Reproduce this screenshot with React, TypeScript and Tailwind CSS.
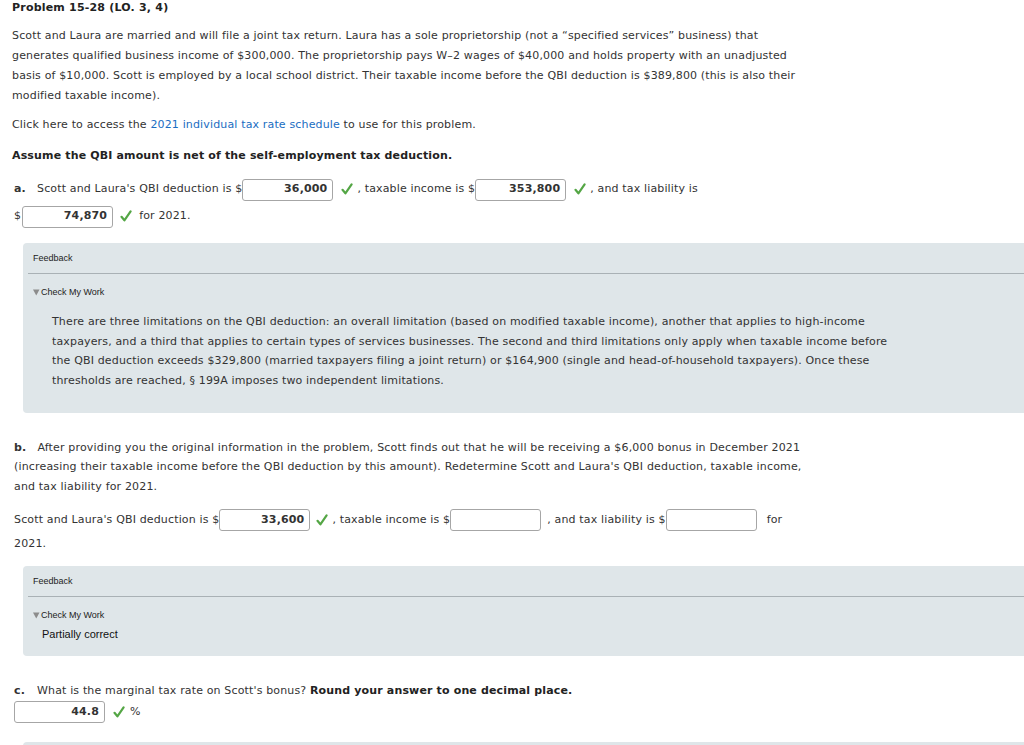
const text = "font-['DejaVu_Sans',Verdana,sans-serif] text-[11px] tracking-[0.15px] text-[#333]";

function Check() {
  return (
    <svg
      width="12"
      height="12"
      viewBox="0 0 12 12"
      className="inline-block shrink-0"
      aria-hidden="true"
    >
      <path
        d="M1.5 6.8 L4.4 10.3 L10.6 1.3"
        fill="none"
        stroke="#54a645"
        strokeWidth="2.2"
        strokeLinecap="round"
        strokeLinejoin="round"
      />
    </svg>
  );
}

function Answer({ value }: { value?: string }) {
  return (
    <span className="inline-flex h-[22px] w-[91px] shrink-0 items-center justify-end rounded-[3px] border border-[#a6a6a6] bg-white pr-[5px] text-[11px] font-bold text-[#333]">
      {value}
    </span>
  );
}

function Feedback({ children }: { children: React.ReactNode }) {
  return (
    <div className="ml-[23px] rounded-l-[4px] bg-[#dfe6e9] pl-[5px]">
      <div className="pl-[5px] pt-[9px] font-['Liberation_Sans',Arial,sans-serif] text-[9px] leading-[12px] tracking-normal text-[#222]">
        Feedback
      </div>
      <div className="mt-[9px] border-t border-[#a9b1b5]" />
      <div className="mt-[12px] flex items-center pl-[5px] font-['Liberation_Sans',Arial,sans-serif] text-[9px] leading-[12px] tracking-normal text-[#222]">
        <svg width="7" height="7" viewBox="0 0 7 7" className="mr-[1px]" aria-hidden="true">
          <path d="M0 0.5 H6.5 L3.25 6.5 Z" fill="#8c8c8c" />
        </svg>
        Check My Work
      </div>
      {children}
    </div>
  );
}

export default function App() {
  return (
    <div className={`min-h-[745px] w-[1024px] overflow-hidden bg-white ${text}`}>
      <h1 className="pl-[12px] text-[11px] font-bold leading-[16px] tracking-[0.2px] text-[#222]">
        Problem 15-28 (LO. 3, 4)
      </h1>

      <p className="mt-[10px] whitespace-nowrap pl-[12px] leading-[20px]">
        Scott and Laura are married and will file a joint tax return. Laura has a sole proprietorship (not a “specified services” business) that
        <br />
        generates qualified business income of $300,000. The proprietorship pays W–2 wages of $40,000 and holds property with an unadjusted
        <br />
        basis of $10,000. Scott is employed by a local school district. Their taxable income before the QBI deduction is $389,800 (this is also their
        <br />
        modified taxable income).
      </p>

      <p className="mt-[9px] pl-[12px] leading-[20px]">
        Click here to access the <span className="text-[#1a6dc2]">2021 individual tax rate schedule</span> to use for this problem.
      </p>

      <p className="mt-[11px] pl-[12px] font-bold leading-[20px] text-[#222]">
        Assume the QBI amount is net of the self-employment tax deduction.
      </p>

      <div className="mt-[10px] pl-[14px]">
        <div className="flex h-[27px] items-center whitespace-nowrap">
          <span className="w-[23px] font-bold">a.</span>
          <span>Scott and Laura's QBI deduction is $</span>
          <Answer value="36,000" />
          <span className="ml-[8px] mr-[4px]"><Check /></span>
          <span>, taxable income is $</span>
          <Answer value="353,800" />
          <span className="ml-[8px] mr-[4px]"><Check /></span>
          <span>, and tax liability is</span>
        </div>
        <div className="flex h-[27px] items-center whitespace-nowrap">
          <span className="mr-[1px]">$</span>
          <Answer value="74,870" />
          <span className="ml-[7px] mr-[7px]"><Check /></span>
          <span>for 2021.</span>
        </div>
      </div>

      <div className="mt-[13px]">
        <Feedback>
          <p className="mt-[14px] whitespace-nowrap pb-[22px] pl-[24px] leading-[19.7px]">
            There are three limitations on the QBI deduction: an overall limitation (based on modified taxable income), another that applies to high-income
            <br />
            taxpayers, and a third that applies to certain types of services businesses. The second and third limitations only apply when taxable income before
            <br />
            the QBI deduction exceeds $329,800 (married taxpayers filing a joint return) or $164,900 (single and head-of-household taxpayers). Once these
            <br />
            thresholds are reached, § 199A imposes two independent limitations.
          </p>
        </Feedback>
      </div>

      <p className="mt-[25px] whitespace-nowrap pl-[14px] leading-[19.5px] tracking-[0.17px]">
        <span className="mr-[11px] font-bold">b.</span>
        After providing you the original information in the problem, Scott finds out that he will be receiving a $6,000 bonus in December 2021
        <br />
        (increasing their taxable income before the QBI deduction by this amount). Redetermine Scott and Laura's QBI deduction, taxable income,
        <br />
        and tax liability for 2021.
      </p>

      <div className="mt-[11px] pl-[14px]">
        <div className="flex h-[26px] items-center whitespace-nowrap">
          <span>Scott and Laura's QBI deduction is $</span>
          <Answer value="33,600" />
          <span className="ml-[6px] mr-[4px]"><Check /></span>
          <span>, taxable income is $</span>
          <Answer />
          <span className="ml-[6px]">, and tax liability is $</span>
          <Answer />
          <span className="ml-[10px]">for</span>
        </div>
        <div className="leading-[21px]">2021.</div>
      </div>

      <div className="mt-[12px]">
        <Feedback>
          <p className="mt-[5px] pb-[14px] pl-[14px] font-['Liberation_Sans',Arial,sans-serif] text-[11px] leading-[16px] tracking-normal text-[#111]">
            Partially correct
          </p>
        </Feedback>
      </div>

      <p className="mt-[25px] pl-[14px] leading-[20px]">
        <span className="mr-[12px] font-bold">c.</span>
        What is the marginal tax rate on Scott's bonus?{" "}
        <span className="font-bold text-[#222]">Round your answer to one decimal place.</span>
      </p>
      <div className="flex h-[22px] items-center pl-[14px] whitespace-nowrap">
        <Answer value="44.8" />
        <span className="ml-[8px] mr-[5px]"><Check /></span>
        <span>%</span>
      </div>

      <div className="ml-[23px] mt-[19px] h-[40px] rounded-l-[4px] bg-[#dfe6e9]" />
    </div>
  );
}
